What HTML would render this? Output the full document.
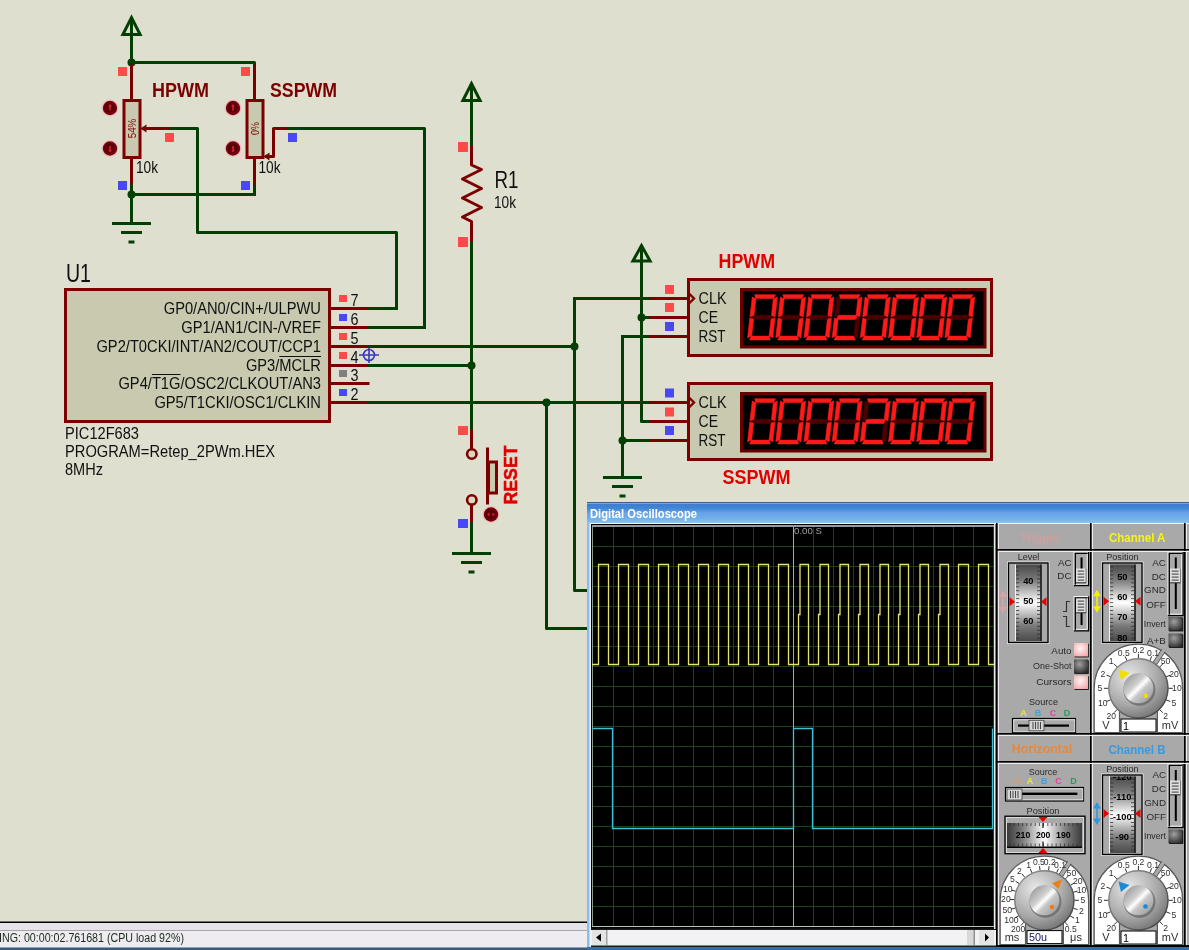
<!DOCTYPE html><html><head><meta charset="utf-8"><style>html,body{margin:0;padding:0;width:1189px;height:950px;overflow:hidden;background:#DFDFD0}</style></head><body>
<svg width="1189" height="950" viewBox="0 0 1189 950" style="position:absolute;left:0;top:0;will-change:transform" font-family="Liberation Sans, sans-serif">
<rect width="1189" height="950" fill="#DFDFD0"/>
<path d="M122.9,34.5 L131.5,17.6 L140.1,34.5 Z M131.5,18.6 V34.5" fill="none" stroke="#033F03" stroke-width="3" stroke-linejoin="miter"/>
<path d="M131.5,34 L131.5,62.5" fill="none" stroke="#033F03" stroke-width="3" stroke-linecap="square" stroke-linejoin="round"/>
<path d="M131.5,62.5 L254.5,62.5 L254.5,66" fill="none" stroke="#033F03" stroke-width="3" stroke-linecap="square" stroke-linejoin="round"/>
<circle cx="131.5" cy="62.5" r="4" fill="#033F03"/>
<path d="M131.5,66 L131.5,99" fill="none" stroke="#7D0000" stroke-width="3" stroke-linecap="square" stroke-linejoin="round"/>
<rect x="124.0" y="100.5" width="16" height="57" fill="#C9C9B0" stroke="#7D0000" stroke-width="3"/>
<path d="M131.5,158 L131.5,186" fill="none" stroke="#7D0000" stroke-width="3" stroke-linecap="square" stroke-linejoin="round"/>
<path d="M131.5,186 L131.5,194.5" fill="none" stroke="#033F03" stroke-width="3" stroke-linecap="square" stroke-linejoin="round"/>
<rect x="118.0" y="67" width="9" height="9" fill="#FF4A4A"/>
<rect x="118.0" y="181" width="9" height="9" fill="#4848F8"/>
<circle cx="110.0" cy="108" r="8.5" fill="#F4B4B4" opacity="0.7"/>
<circle cx="110.0" cy="108" r="7.2" fill="#780010"/>
<circle cx="109.5" cy="107.5" r="5.2" fill="#5A0008"/>
<path d="M108.0,106.5 L110.0,104 L112.0,106.5 Z M109.2,106 h1.6 v4.5 h-1.6 Z" fill="#D82030"/>
<circle cx="110.0" cy="148.5" r="8.5" fill="#F4B4B4" opacity="0.7"/>
<circle cx="110.0" cy="148.5" r="7.2" fill="#780010"/>
<circle cx="109.5" cy="148.0" r="5.2" fill="#5A0008"/>
<path d="M108.0,150.0 L110.0,152.5 L112.0,150.0 Z M109.2,150.5 h1.6 v-4.5 h-1.6 Z" fill="#D82030"/>
<path d="M254.5,66 L254.5,99" fill="none" stroke="#7D0000" stroke-width="3" stroke-linecap="square" stroke-linejoin="round"/>
<rect x="247.0" y="100.5" width="16" height="57" fill="#C9C9B0" stroke="#7D0000" stroke-width="3"/>
<path d="M254.5,158 L254.5,186" fill="none" stroke="#7D0000" stroke-width="3" stroke-linecap="square" stroke-linejoin="round"/>
<path d="M254.5,186 L254.5,194.5" fill="none" stroke="#033F03" stroke-width="3" stroke-linecap="square" stroke-linejoin="round"/>
<rect x="241.0" y="67" width="9" height="9" fill="#FF4A4A"/>
<rect x="241.0" y="181" width="9" height="9" fill="#4848F8"/>
<circle cx="233.0" cy="108" r="8.5" fill="#F4B4B4" opacity="0.7"/>
<circle cx="233.0" cy="108" r="7.2" fill="#780010"/>
<circle cx="232.5" cy="107.5" r="5.2" fill="#5A0008"/>
<path d="M231.0,106.5 L233.0,104 L235.0,106.5 Z M232.2,106 h1.6 v4.5 h-1.6 Z" fill="#D82030"/>
<circle cx="233.0" cy="148.5" r="8.5" fill="#F4B4B4" opacity="0.7"/>
<circle cx="233.0" cy="148.5" r="7.2" fill="#780010"/>
<circle cx="232.5" cy="148.0" r="5.2" fill="#5A0008"/>
<path d="M231.0,150.0 L233.0,152.5 L235.0,150.0 Z M232.2,150.5 h1.6 v-4.5 h-1.6 Z" fill="#D82030"/>
<circle cx="131.5" cy="194.5" r="4" fill="#033F03"/>
<path d="M131.5,194.5 L254.5,194.5" fill="none" stroke="#033F03" stroke-width="3" stroke-linecap="square" stroke-linejoin="round"/>
<path d="M131.5,194.5 L131.5,223" fill="none" stroke="#033F03" stroke-width="3" stroke-linecap="square" stroke-linejoin="round"/>
<path d="M112.0,223.5 H151.0 M121.0,232.5 H142.0 M128.5,242.0 H134.5" stroke="#033F03" stroke-width="3" fill="none"/>
<path d="M140.5,128.5 l6,-4 v8 z" fill="#7D0000"/>
<path d="M143.5,128.5 L171,128.5" fill="none" stroke="#7D0000" stroke-width="3" stroke-linecap="square" stroke-linejoin="round"/>
<path d="M171,128.5 L197.5,128.5 L197.5,232.5 L396.5,232.5 L396.5,308" fill="none" stroke="#033F03" stroke-width="3" stroke-linecap="square" stroke-linejoin="round"/>
<rect x="165" y="133" width="9" height="9" fill="#FF4A4A"/>
<path d="M263.5,156.5 l6,-4 v8 z" fill="#7D0000"/>
<path d="M266.5,156.5 L273.5,156.5 L273.5,128.5 L289,128.5" fill="none" stroke="#7D0000" stroke-width="3" stroke-linecap="square" stroke-linejoin="round"/>
<path d="M289,128.5 L424.5,128.5 L424.5,327" fill="none" stroke="#033F03" stroke-width="3" stroke-linecap="square" stroke-linejoin="round"/>
<rect x="288" y="133" width="9" height="9" fill="#4848F8"/>
<text x="0" y="0" font-size="10" fill="#7D0000" font-weight="normal" text-anchor="middle" textLength="19.5" lengthAdjust="spacingAndGlyphs" transform="translate(136,128.5) rotate(-90)">54%</text>
<text x="0" y="0" font-size="10" fill="#7D0000" font-weight="normal" text-anchor="middle" textLength="13" lengthAdjust="spacingAndGlyphs" transform="translate(259,128.5) rotate(-90)">0%</text>
<text x="152" y="97" font-size="20.5" fill="#7D0000" font-weight="bold" text-anchor="start" textLength="57" lengthAdjust="spacingAndGlyphs" >HPWM</text>
<text x="270" y="97" font-size="20.5" fill="#7D0000" font-weight="bold" text-anchor="start" textLength="67" lengthAdjust="spacingAndGlyphs" >SSPWM</text>
<text x="136" y="173" font-size="16" fill="#101010" font-weight="normal" text-anchor="start" textLength="22" lengthAdjust="spacingAndGlyphs" >10k</text>
<text x="258.5" y="173" font-size="16" fill="#101010" font-weight="normal" text-anchor="start" textLength="22" lengthAdjust="spacingAndGlyphs" >10k</text>
<rect x="65.5" y="289.5" width="264" height="132" fill="#C9C9B0" stroke="#7D0000" stroke-width="3"/>
<text x="66" y="282" font-size="26" fill="#101010" font-weight="normal" text-anchor="start" textLength="25" lengthAdjust="spacingAndGlyphs" >U1</text>
<path d="M331,308.5 L369.5,308.5" fill="none" stroke="#7D0000" stroke-width="3" stroke-linecap="square" stroke-linejoin="round"/>
<rect x="339" y="295.0" width="8" height="7" fill="#FF4A4A"/>
<text x="350.5" y="305.5" font-size="16" fill="#101010" font-weight="normal" text-anchor="start" textLength="8" lengthAdjust="spacingAndGlyphs" >7</text>
<text x="321" y="313.5" font-size="17" fill="#101010" font-weight="normal" text-anchor="end" textLength="157.3" lengthAdjust="spacingAndGlyphs" >GP0/AN0/CIN+/ULPWU</text>
<path d="M331,327.5 L369.5,327.5" fill="none" stroke="#7D0000" stroke-width="3" stroke-linecap="square" stroke-linejoin="round"/>
<rect x="339" y="314.0" width="8" height="7" fill="#4848F8"/>
<text x="350.5" y="324.5" font-size="16" fill="#101010" font-weight="normal" text-anchor="start" textLength="8" lengthAdjust="spacingAndGlyphs" >6</text>
<text x="321" y="332.5" font-size="17" fill="#101010" font-weight="normal" text-anchor="end" textLength="139.7" lengthAdjust="spacingAndGlyphs" >GP1/AN1/CIN-/VREF</text>
<path d="M331,346.5 L369.5,346.5" fill="none" stroke="#7D0000" stroke-width="3" stroke-linecap="square" stroke-linejoin="round"/>
<rect x="339" y="333.0" width="8" height="7" fill="#FF4A4A"/>
<text x="350.5" y="343.5" font-size="16" fill="#101010" font-weight="normal" text-anchor="start" textLength="8" lengthAdjust="spacingAndGlyphs" >5</text>
<text x="321" y="351.5" font-size="17" fill="#101010" font-weight="normal" text-anchor="end" textLength="224.6" lengthAdjust="spacingAndGlyphs" >GP2/T0CKI/INT/AN2/COUT/CCP1</text>
<path d="M331,365.5 L369.5,365.5" fill="none" stroke="#7D0000" stroke-width="3" stroke-linecap="square" stroke-linejoin="round"/>
<rect x="339" y="352.0" width="8" height="7" fill="#FF4A4A"/>
<text x="350.5" y="362.5" font-size="16" fill="#101010" font-weight="normal" text-anchor="start" textLength="8" lengthAdjust="spacingAndGlyphs" >4</text>
<text x="321" y="370.5" font-size="17" fill="#101010" font-weight="normal" text-anchor="end" textLength="75.1" lengthAdjust="spacingAndGlyphs" >GP3/MCLR</text>
<path d="M331,383.5 L368,383.5" fill="none" stroke="#7D0000" stroke-width="3" stroke-linecap="square" stroke-linejoin="round"/>
<rect x="339" y="370.0" width="8" height="7" fill="#808080"/>
<text x="350.5" y="380.5" font-size="16" fill="#101010" font-weight="normal" text-anchor="start" textLength="8" lengthAdjust="spacingAndGlyphs" >3</text>
<text x="321" y="388.5" font-size="17" fill="#101010" font-weight="normal" text-anchor="end" textLength="202.6" lengthAdjust="spacingAndGlyphs" >GP4/T1G/OSC2/CLKOUT/AN3</text>
<path d="M331,402.5 L369.5,402.5" fill="none" stroke="#7D0000" stroke-width="3" stroke-linecap="square" stroke-linejoin="round"/>
<rect x="339" y="389.0" width="8" height="7" fill="#4848F8"/>
<text x="350.5" y="399.5" font-size="16" fill="#101010" font-weight="normal" text-anchor="start" textLength="8" lengthAdjust="spacingAndGlyphs" >2</text>
<text x="321" y="407.5" font-size="17" fill="#101010" font-weight="normal" text-anchor="end" textLength="166.6" lengthAdjust="spacingAndGlyphs" >GP5/T1CKI/OSC1/CLKIN</text>
<path d="M279.3,356.5 H321" stroke="#101010" stroke-width="1"/>
<path d="M151.9,374.5 H180.5" stroke="#101010" stroke-width="1"/>
<text x="65" y="439" font-size="17" fill="#101010" font-weight="normal" text-anchor="start" textLength="74" lengthAdjust="spacingAndGlyphs" >PIC12F683</text>
<text x="65" y="457" font-size="17" fill="#101010" font-weight="normal" text-anchor="start" textLength="210" lengthAdjust="spacingAndGlyphs" >PROGRAM=Retep_2PWm.HEX</text>
<text x="65" y="475" font-size="17" fill="#101010" font-weight="normal" text-anchor="start" textLength="38" lengthAdjust="spacingAndGlyphs" >8MHz</text>
<g stroke="#3838C0" stroke-width="1.6" fill="none"><circle cx="369" cy="355" r="5.5"/><path d="M359,355 H379 M369,345 V363"/></g>
<path d="M369.5,308.5 L396.5,308.5" fill="none" stroke="#033F03" stroke-width="3" stroke-linecap="square" stroke-linejoin="round"/>
<path d="M369.5,327.5 L424.5,327.5" fill="none" stroke="#033F03" stroke-width="3" stroke-linecap="square" stroke-linejoin="round"/>
<path d="M369.5,346.5 L574.5,346.5" fill="none" stroke="#033F03" stroke-width="3" stroke-linecap="square" stroke-linejoin="round"/>
<path d="M369.5,365.5 L471.5,365.5" fill="none" stroke="#033F03" stroke-width="3" stroke-linecap="square" stroke-linejoin="round"/>
<path d="M369.5,402.5 L651,402.5" fill="none" stroke="#033F03" stroke-width="3" stroke-linecap="square" stroke-linejoin="round"/>
<circle cx="471.5" cy="365.5" r="4" fill="#033F03"/>
<circle cx="574.5" cy="346.5" r="4" fill="#033F03"/>
<circle cx="546.5" cy="402.5" r="4" fill="#033F03"/>
<path d="M462.9,100.5 L471.5,83.6 L480.1,100.5 Z M471.5,84.6 V100.5" fill="none" stroke="#033F03" stroke-width="3" stroke-linejoin="miter"/>
<path d="M471.5,100 L471.5,147" fill="none" stroke="#033F03" stroke-width="3" stroke-linecap="square" stroke-linejoin="round"/>
<path d="M471.5,147 L471.5,165 L481.5,169.5 L462.5,179 L481.5,188.5 L462.5,198 L481.5,207.5 L462.5,217 L471.5,221.5 L471.5,243" fill="none" stroke="#7D0000" stroke-width="3" stroke-linecap="square" stroke-linejoin="round"/>
<rect x="458" y="142" width="10" height="10" fill="#FF4A4A"/>
<rect x="458" y="237" width="10" height="10" fill="#FF4A4A"/>
<path d="M471.5,243 L471.5,431" fill="none" stroke="#033F03" stroke-width="3" stroke-linecap="square" stroke-linejoin="round"/>
<text x="494.5" y="187.5" font-size="23.5" fill="#101010" font-weight="normal" text-anchor="start" textLength="24" lengthAdjust="spacingAndGlyphs" >R1</text>
<text x="494" y="207.5" font-size="16" fill="#101010" font-weight="normal" text-anchor="start" textLength="22" lengthAdjust="spacingAndGlyphs" >10k</text>
<rect x="458" y="426" width="10" height="9" fill="#FF4A4A"/>
<path d="M471.5,431 L471.5,449" fill="none" stroke="#7D0000" stroke-width="3" stroke-linecap="square" stroke-linejoin="round"/>
<circle cx="471.8" cy="454" r="4.7" fill="#D8D8C0" stroke="#7D0000" stroke-width="2.6"/>
<circle cx="471.8" cy="500" r="4.7" fill="#D8D8C0" stroke="#7D0000" stroke-width="2.6"/>
<path d="M471.5,505 L471.5,523.5" fill="none" stroke="#7D0000" stroke-width="3" stroke-linecap="square" stroke-linejoin="round"/>
<path d="M471.5,523.5 L471.5,553" fill="none" stroke="#033F03" stroke-width="3" stroke-linecap="square" stroke-linejoin="round"/>
<rect x="458" y="519" width="10" height="9" fill="#4848F8"/>
<path d="M452.0,553.5 H491.0 M461.0,562.5 H482.0 M468.5,572.0 H474.5" stroke="#033F03" stroke-width="3" fill="none"/>
<path d="M487.5,449 L487.5,503" fill="none" stroke="#7D0000" stroke-width="3" stroke-linecap="square" stroke-linejoin="round"/>
<rect x="488.5" y="462" width="8" height="31" fill="#C9C9B0" stroke="#7D0000" stroke-width="3"/>
<circle cx="491" cy="514.5" r="8.5" fill="#F4B4B4" opacity="0.7"/>
<circle cx="491" cy="514.5" r="7.2" fill="#780010"/>
<circle cx="490.5" cy="514.0" r="5.2" fill="#5A0008"/>
<path d="M487,514.5 L489.5,512.5 V516.5 Z M495,514.5 L492.5,512.5 V516.5 Z" fill="#D82030"/>
<text x="0" y="0" font-size="18.5" fill="#E00000" font-weight="bold" text-anchor="start" textLength="59" lengthAdjust="spacingAndGlyphs" stroke="#E00000" stroke-width="0.5" transform="translate(517,504.5) rotate(-90)">RESET</text>
<path d="M632.9,261 L641.5,245.6 L650.1,261 Z M641.5,246.6 V261" fill="none" stroke="#033F03" stroke-width="3" stroke-linejoin="miter"/>
<path d="M641.5,261 L641.5,421.5 L688,421.5" fill="none" stroke="#033F03" stroke-width="3" stroke-linecap="square" stroke-linejoin="round"/>
<circle cx="641.5" cy="317.5" r="4" fill="#033F03"/>
<path d="M641.5,317.5 L651,317.5" fill="none" stroke="#033F03" stroke-width="3" stroke-linecap="square" stroke-linejoin="round"/>
<path d="M574.5,298.5 L651,298.5" fill="none" stroke="#033F03" stroke-width="3" stroke-linecap="square" stroke-linejoin="round"/>
<path d="M574.5,298.5 L574.5,590.5 L588,590.5" fill="none" stroke="#033F03" stroke-width="3" stroke-linecap="square" stroke-linejoin="round"/>
<path d="M546.5,402.5 L546.5,628.5 L588,628.5" fill="none" stroke="#033F03" stroke-width="3" stroke-linecap="square" stroke-linejoin="round"/>
<path d="M622.5,336.5 L651,336.5" fill="none" stroke="#033F03" stroke-width="3" stroke-linecap="square" stroke-linejoin="round"/>
<path d="M622.5,336.5 L622.5,477" fill="none" stroke="#033F03" stroke-width="3" stroke-linecap="square" stroke-linejoin="round"/>
<circle cx="622.5" cy="440.5" r="4" fill="#033F03"/>
<path d="M622.5,440.5 L651,440.5" fill="none" stroke="#033F03" stroke-width="3" stroke-linecap="square" stroke-linejoin="round"/>
<path d="M603.0,477.5 H642.0 M612.0,486.5 H633.0 M619.5,496.0 H625.5" stroke="#033F03" stroke-width="3" fill="none"/>
<rect x="688.5" y="279.5" width="303" height="76" fill="#C9C9B0" stroke="#7D0000" stroke-width="3"/>
<rect x="741.5" y="289.5" width="243.5" height="57.5" fill="#000" stroke="#680000" stroke-width="3"/>
<path d="M651,298.5 L687,298.5" fill="none" stroke="#7D0000" stroke-width="3" stroke-linecap="square" stroke-linejoin="round"/>
<text x="698.5" y="303.5" font-size="17" fill="#101010" font-weight="normal" text-anchor="start" textLength="28" lengthAdjust="spacingAndGlyphs" >CLK</text>
<path d="M651,317.5 L687,317.5" fill="none" stroke="#7D0000" stroke-width="3" stroke-linecap="square" stroke-linejoin="round"/>
<text x="698.5" y="322.5" font-size="17" fill="#101010" font-weight="normal" text-anchor="start" textLength="19.5" lengthAdjust="spacingAndGlyphs" >CE</text>
<path d="M651,336.5 L687,336.5" fill="none" stroke="#7D0000" stroke-width="3" stroke-linecap="square" stroke-linejoin="round"/>
<text x="698.5" y="341.5" font-size="17" fill="#101010" font-weight="normal" text-anchor="start" textLength="27" lengthAdjust="spacingAndGlyphs" >RST</text>
<path d="M688,292.5 l6,6 l-6,6" fill="none" stroke="#7D0000" stroke-width="2.4"/>
<rect x="688.5" y="383.5" width="303" height="76" fill="#C9C9B0" stroke="#7D0000" stroke-width="3"/>
<rect x="741.5" y="393.5" width="243.5" height="57.5" fill="#000" stroke="#680000" stroke-width="3"/>
<path d="M651,402.5 L687,402.5" fill="none" stroke="#7D0000" stroke-width="3" stroke-linecap="square" stroke-linejoin="round"/>
<text x="698.5" y="407.5" font-size="17" fill="#101010" font-weight="normal" text-anchor="start" textLength="28" lengthAdjust="spacingAndGlyphs" >CLK</text>
<path d="M651,421.5 L687,421.5" fill="none" stroke="#7D0000" stroke-width="3" stroke-linecap="square" stroke-linejoin="round"/>
<text x="698.5" y="426.5" font-size="17" fill="#101010" font-weight="normal" text-anchor="start" textLength="19.5" lengthAdjust="spacingAndGlyphs" >CE</text>
<path d="M651,440.5 L687,440.5" fill="none" stroke="#7D0000" stroke-width="3" stroke-linecap="square" stroke-linejoin="round"/>
<text x="698.5" y="445.5" font-size="17" fill="#101010" font-weight="normal" text-anchor="start" textLength="27" lengthAdjust="spacingAndGlyphs" >RST</text>
<path d="M688,396.5 l6,6 l-6,6" fill="none" stroke="#7D0000" stroke-width="2.4"/>
<rect x="665" y="285" width="9" height="9" fill="#FF4A4A"/>
<rect x="665" y="303" width="9" height="9" fill="#FF4A4A"/>
<rect x="665" y="322" width="9" height="9" fill="#4848F8"/>
<rect x="665" y="388.5" width="9" height="9" fill="#4848F8"/>
<rect x="665" y="407.5" width="9" height="9" fill="#FF4A4A"/>
<rect x="665" y="426" width="9" height="9" fill="#4848F8"/>
<text x="718.5" y="268" font-size="20.5" fill="#E00000" font-weight="bold" text-anchor="start" textLength="56.5" lengthAdjust="spacingAndGlyphs" >HPWM</text>
<text x="722.5" y="483.5" font-size="20.5" fill="#E00000" font-weight="bold" text-anchor="start" textLength="68" lengthAdjust="spacingAndGlyphs" >SSPWM</text>
<polygon points="754.70,294.70 775.50,294.70 773.65,298.60 755.65,298.60" fill="#FF1A1A" stroke="#FF1A1A" stroke-width="0.6" stroke-linejoin="round"/>
<polygon points="751.35,336.10 769.35,336.10 770.30,340.00 749.50,340.00" fill="#FF1A1A" stroke="#FF1A1A" stroke-width="0.6" stroke-linejoin="round"/>
<polygon points="752.25,296.90 755.91,299.00 753.98,315.75 749.97,316.75" fill="#FF1A1A" stroke="#FF1A1A" stroke-width="0.6" stroke-linejoin="round"/>
<polygon points="749.83,317.95 753.62,318.95 751.69,335.70 747.55,337.80" fill="#FF1A1A" stroke="#FF1A1A" stroke-width="0.6" stroke-linejoin="round"/>
<polygon points="777.45,296.90 775.17,316.75 771.38,315.75 773.31,299.00" fill="#FF1A1A" stroke="#FF1A1A" stroke-width="0.6" stroke-linejoin="round"/>
<polygon points="775.03,317.95 772.75,337.80 769.09,335.70 771.02,318.95" fill="#FF1A1A" stroke="#FF1A1A" stroke-width="0.6" stroke-linejoin="round"/>
<polygon points="752.40,317.35 754.54,315.25 770.94,315.25 772.60,317.35 770.46,319.45 754.06,319.45" fill="#4C0000" stroke="#4C0000" stroke-width="0.6" stroke-linejoin="round"/>
<polygon points="782.90,294.70 803.70,294.70 801.85,298.60 783.85,298.60" fill="#FF1A1A" stroke="#FF1A1A" stroke-width="0.6" stroke-linejoin="round"/>
<polygon points="779.55,336.10 797.55,336.10 798.50,340.00 777.70,340.00" fill="#FF1A1A" stroke="#FF1A1A" stroke-width="0.6" stroke-linejoin="round"/>
<polygon points="780.45,296.90 784.11,299.00 782.18,315.75 778.17,316.75" fill="#FF1A1A" stroke="#FF1A1A" stroke-width="0.6" stroke-linejoin="round"/>
<polygon points="778.03,317.95 781.82,318.95 779.89,335.70 775.75,337.80" fill="#FF1A1A" stroke="#FF1A1A" stroke-width="0.6" stroke-linejoin="round"/>
<polygon points="805.65,296.90 803.37,316.75 799.58,315.75 801.51,299.00" fill="#FF1A1A" stroke="#FF1A1A" stroke-width="0.6" stroke-linejoin="round"/>
<polygon points="803.23,317.95 800.95,337.80 797.29,335.70 799.22,318.95" fill="#FF1A1A" stroke="#FF1A1A" stroke-width="0.6" stroke-linejoin="round"/>
<polygon points="780.60,317.35 782.74,315.25 799.14,315.25 800.80,317.35 798.66,319.45 782.26,319.45" fill="#4C0000" stroke="#4C0000" stroke-width="0.6" stroke-linejoin="round"/>
<polygon points="811.10,294.70 831.90,294.70 830.05,298.60 812.05,298.60" fill="#FF1A1A" stroke="#FF1A1A" stroke-width="0.6" stroke-linejoin="round"/>
<polygon points="807.75,336.10 825.75,336.10 826.70,340.00 805.90,340.00" fill="#FF1A1A" stroke="#FF1A1A" stroke-width="0.6" stroke-linejoin="round"/>
<polygon points="808.65,296.90 812.31,299.00 810.38,315.75 806.37,316.75" fill="#FF1A1A" stroke="#FF1A1A" stroke-width="0.6" stroke-linejoin="round"/>
<polygon points="806.23,317.95 810.02,318.95 808.09,335.70 803.95,337.80" fill="#FF1A1A" stroke="#FF1A1A" stroke-width="0.6" stroke-linejoin="round"/>
<polygon points="833.85,296.90 831.57,316.75 827.78,315.75 829.71,299.00" fill="#FF1A1A" stroke="#FF1A1A" stroke-width="0.6" stroke-linejoin="round"/>
<polygon points="831.43,317.95 829.15,337.80 825.49,335.70 827.42,318.95" fill="#FF1A1A" stroke="#FF1A1A" stroke-width="0.6" stroke-linejoin="round"/>
<polygon points="808.80,317.35 810.94,315.25 827.34,315.25 829.00,317.35 826.86,319.45 810.46,319.45" fill="#4C0000" stroke="#4C0000" stroke-width="0.6" stroke-linejoin="round"/>
<polygon points="839.30,294.70 860.10,294.70 858.25,298.60 840.25,298.60" fill="#FF1A1A" stroke="#FF1A1A" stroke-width="0.6" stroke-linejoin="round"/>
<polygon points="835.95,336.10 853.95,336.10 854.90,340.00 834.10,340.00" fill="#FF1A1A" stroke="#FF1A1A" stroke-width="0.6" stroke-linejoin="round"/>
<polygon points="836.85,296.90 840.51,299.00 838.58,315.75 834.57,316.75" fill="#4C0000" stroke="#4C0000" stroke-width="0.6" stroke-linejoin="round"/>
<polygon points="834.43,317.95 838.22,318.95 836.29,335.70 832.15,337.80" fill="#FF1A1A" stroke="#FF1A1A" stroke-width="0.6" stroke-linejoin="round"/>
<polygon points="862.05,296.90 859.77,316.75 855.98,315.75 857.91,299.00" fill="#FF1A1A" stroke="#FF1A1A" stroke-width="0.6" stroke-linejoin="round"/>
<polygon points="859.63,317.95 857.35,337.80 853.69,335.70 855.62,318.95" fill="#4C0000" stroke="#4C0000" stroke-width="0.6" stroke-linejoin="round"/>
<polygon points="837.00,317.35 839.14,315.25 855.54,315.25 857.20,317.35 855.06,319.45 838.66,319.45" fill="#FF1A1A" stroke="#FF1A1A" stroke-width="0.6" stroke-linejoin="round"/>
<polygon points="867.50,294.70 888.30,294.70 886.45,298.60 868.45,298.60" fill="#FF1A1A" stroke="#FF1A1A" stroke-width="0.6" stroke-linejoin="round"/>
<polygon points="864.15,336.10 882.15,336.10 883.10,340.00 862.30,340.00" fill="#FF1A1A" stroke="#FF1A1A" stroke-width="0.6" stroke-linejoin="round"/>
<polygon points="865.05,296.90 868.71,299.00 866.78,315.75 862.77,316.75" fill="#FF1A1A" stroke="#FF1A1A" stroke-width="0.6" stroke-linejoin="round"/>
<polygon points="862.63,317.95 866.42,318.95 864.49,335.70 860.35,337.80" fill="#FF1A1A" stroke="#FF1A1A" stroke-width="0.6" stroke-linejoin="round"/>
<polygon points="890.25,296.90 887.97,316.75 884.18,315.75 886.11,299.00" fill="#FF1A1A" stroke="#FF1A1A" stroke-width="0.6" stroke-linejoin="round"/>
<polygon points="887.83,317.95 885.55,337.80 881.89,335.70 883.82,318.95" fill="#FF1A1A" stroke="#FF1A1A" stroke-width="0.6" stroke-linejoin="round"/>
<polygon points="865.20,317.35 867.34,315.25 883.74,315.25 885.40,317.35 883.26,319.45 866.86,319.45" fill="#4C0000" stroke="#4C0000" stroke-width="0.6" stroke-linejoin="round"/>
<polygon points="895.70,294.70 916.50,294.70 914.65,298.60 896.65,298.60" fill="#FF1A1A" stroke="#FF1A1A" stroke-width="0.6" stroke-linejoin="round"/>
<polygon points="892.35,336.10 910.35,336.10 911.30,340.00 890.50,340.00" fill="#FF1A1A" stroke="#FF1A1A" stroke-width="0.6" stroke-linejoin="round"/>
<polygon points="893.25,296.90 896.91,299.00 894.98,315.75 890.97,316.75" fill="#FF1A1A" stroke="#FF1A1A" stroke-width="0.6" stroke-linejoin="round"/>
<polygon points="890.83,317.95 894.62,318.95 892.69,335.70 888.55,337.80" fill="#FF1A1A" stroke="#FF1A1A" stroke-width="0.6" stroke-linejoin="round"/>
<polygon points="918.45,296.90 916.17,316.75 912.38,315.75 914.31,299.00" fill="#FF1A1A" stroke="#FF1A1A" stroke-width="0.6" stroke-linejoin="round"/>
<polygon points="916.03,317.95 913.75,337.80 910.09,335.70 912.02,318.95" fill="#FF1A1A" stroke="#FF1A1A" stroke-width="0.6" stroke-linejoin="round"/>
<polygon points="893.40,317.35 895.54,315.25 911.94,315.25 913.60,317.35 911.46,319.45 895.06,319.45" fill="#4C0000" stroke="#4C0000" stroke-width="0.6" stroke-linejoin="round"/>
<polygon points="923.90,294.70 944.70,294.70 942.85,298.60 924.85,298.60" fill="#FF1A1A" stroke="#FF1A1A" stroke-width="0.6" stroke-linejoin="round"/>
<polygon points="920.55,336.10 938.55,336.10 939.50,340.00 918.70,340.00" fill="#FF1A1A" stroke="#FF1A1A" stroke-width="0.6" stroke-linejoin="round"/>
<polygon points="921.45,296.90 925.11,299.00 923.18,315.75 919.17,316.75" fill="#FF1A1A" stroke="#FF1A1A" stroke-width="0.6" stroke-linejoin="round"/>
<polygon points="919.03,317.95 922.82,318.95 920.89,335.70 916.75,337.80" fill="#FF1A1A" stroke="#FF1A1A" stroke-width="0.6" stroke-linejoin="round"/>
<polygon points="946.65,296.90 944.37,316.75 940.58,315.75 942.51,299.00" fill="#FF1A1A" stroke="#FF1A1A" stroke-width="0.6" stroke-linejoin="round"/>
<polygon points="944.23,317.95 941.95,337.80 938.29,335.70 940.22,318.95" fill="#FF1A1A" stroke="#FF1A1A" stroke-width="0.6" stroke-linejoin="round"/>
<polygon points="921.60,317.35 923.74,315.25 940.14,315.25 941.80,317.35 939.66,319.45 923.26,319.45" fill="#4C0000" stroke="#4C0000" stroke-width="0.6" stroke-linejoin="round"/>
<polygon points="952.10,294.70 972.90,294.70 971.05,298.60 953.05,298.60" fill="#FF1A1A" stroke="#FF1A1A" stroke-width="0.6" stroke-linejoin="round"/>
<polygon points="948.75,336.10 966.75,336.10 967.70,340.00 946.90,340.00" fill="#FF1A1A" stroke="#FF1A1A" stroke-width="0.6" stroke-linejoin="round"/>
<polygon points="949.65,296.90 953.31,299.00 951.38,315.75 947.37,316.75" fill="#FF1A1A" stroke="#FF1A1A" stroke-width="0.6" stroke-linejoin="round"/>
<polygon points="947.23,317.95 951.02,318.95 949.09,335.70 944.95,337.80" fill="#FF1A1A" stroke="#FF1A1A" stroke-width="0.6" stroke-linejoin="round"/>
<polygon points="974.85,296.90 972.57,316.75 968.78,315.75 970.71,299.00" fill="#FF1A1A" stroke="#FF1A1A" stroke-width="0.6" stroke-linejoin="round"/>
<polygon points="972.43,317.95 970.15,337.80 966.49,335.70 968.42,318.95" fill="#FF1A1A" stroke="#FF1A1A" stroke-width="0.6" stroke-linejoin="round"/>
<polygon points="949.80,317.35 951.94,315.25 968.34,315.25 970.00,317.35 967.86,319.45 951.46,319.45" fill="#4C0000" stroke="#4C0000" stroke-width="0.6" stroke-linejoin="round"/>
<polygon points="754.70,398.70 775.50,398.70 773.65,402.60 755.65,402.60" fill="#FF1A1A" stroke="#FF1A1A" stroke-width="0.6" stroke-linejoin="round"/>
<polygon points="751.35,440.10 769.35,440.10 770.30,444.00 749.50,444.00" fill="#FF1A1A" stroke="#FF1A1A" stroke-width="0.6" stroke-linejoin="round"/>
<polygon points="752.25,400.90 755.91,403.00 753.98,419.75 749.97,420.75" fill="#FF1A1A" stroke="#FF1A1A" stroke-width="0.6" stroke-linejoin="round"/>
<polygon points="749.83,421.95 753.62,422.95 751.69,439.70 747.55,441.80" fill="#FF1A1A" stroke="#FF1A1A" stroke-width="0.6" stroke-linejoin="round"/>
<polygon points="777.45,400.90 775.17,420.75 771.38,419.75 773.31,403.00" fill="#FF1A1A" stroke="#FF1A1A" stroke-width="0.6" stroke-linejoin="round"/>
<polygon points="775.03,421.95 772.75,441.80 769.09,439.70 771.02,422.95" fill="#FF1A1A" stroke="#FF1A1A" stroke-width="0.6" stroke-linejoin="round"/>
<polygon points="752.40,421.35 754.54,419.25 770.94,419.25 772.60,421.35 770.46,423.45 754.06,423.45" fill="#4C0000" stroke="#4C0000" stroke-width="0.6" stroke-linejoin="round"/>
<polygon points="782.90,398.70 803.70,398.70 801.85,402.60 783.85,402.60" fill="#FF1A1A" stroke="#FF1A1A" stroke-width="0.6" stroke-linejoin="round"/>
<polygon points="779.55,440.10 797.55,440.10 798.50,444.00 777.70,444.00" fill="#FF1A1A" stroke="#FF1A1A" stroke-width="0.6" stroke-linejoin="round"/>
<polygon points="780.45,400.90 784.11,403.00 782.18,419.75 778.17,420.75" fill="#FF1A1A" stroke="#FF1A1A" stroke-width="0.6" stroke-linejoin="round"/>
<polygon points="778.03,421.95 781.82,422.95 779.89,439.70 775.75,441.80" fill="#FF1A1A" stroke="#FF1A1A" stroke-width="0.6" stroke-linejoin="round"/>
<polygon points="805.65,400.90 803.37,420.75 799.58,419.75 801.51,403.00" fill="#FF1A1A" stroke="#FF1A1A" stroke-width="0.6" stroke-linejoin="round"/>
<polygon points="803.23,421.95 800.95,441.80 797.29,439.70 799.22,422.95" fill="#FF1A1A" stroke="#FF1A1A" stroke-width="0.6" stroke-linejoin="round"/>
<polygon points="780.60,421.35 782.74,419.25 799.14,419.25 800.80,421.35 798.66,423.45 782.26,423.45" fill="#4C0000" stroke="#4C0000" stroke-width="0.6" stroke-linejoin="round"/>
<polygon points="811.10,398.70 831.90,398.70 830.05,402.60 812.05,402.60" fill="#FF1A1A" stroke="#FF1A1A" stroke-width="0.6" stroke-linejoin="round"/>
<polygon points="807.75,440.10 825.75,440.10 826.70,444.00 805.90,444.00" fill="#FF1A1A" stroke="#FF1A1A" stroke-width="0.6" stroke-linejoin="round"/>
<polygon points="808.65,400.90 812.31,403.00 810.38,419.75 806.37,420.75" fill="#FF1A1A" stroke="#FF1A1A" stroke-width="0.6" stroke-linejoin="round"/>
<polygon points="806.23,421.95 810.02,422.95 808.09,439.70 803.95,441.80" fill="#FF1A1A" stroke="#FF1A1A" stroke-width="0.6" stroke-linejoin="round"/>
<polygon points="833.85,400.90 831.57,420.75 827.78,419.75 829.71,403.00" fill="#FF1A1A" stroke="#FF1A1A" stroke-width="0.6" stroke-linejoin="round"/>
<polygon points="831.43,421.95 829.15,441.80 825.49,439.70 827.42,422.95" fill="#FF1A1A" stroke="#FF1A1A" stroke-width="0.6" stroke-linejoin="round"/>
<polygon points="808.80,421.35 810.94,419.25 827.34,419.25 829.00,421.35 826.86,423.45 810.46,423.45" fill="#4C0000" stroke="#4C0000" stroke-width="0.6" stroke-linejoin="round"/>
<polygon points="839.30,398.70 860.10,398.70 858.25,402.60 840.25,402.60" fill="#FF1A1A" stroke="#FF1A1A" stroke-width="0.6" stroke-linejoin="round"/>
<polygon points="835.95,440.10 853.95,440.10 854.90,444.00 834.10,444.00" fill="#FF1A1A" stroke="#FF1A1A" stroke-width="0.6" stroke-linejoin="round"/>
<polygon points="836.85,400.90 840.51,403.00 838.58,419.75 834.57,420.75" fill="#FF1A1A" stroke="#FF1A1A" stroke-width="0.6" stroke-linejoin="round"/>
<polygon points="834.43,421.95 838.22,422.95 836.29,439.70 832.15,441.80" fill="#FF1A1A" stroke="#FF1A1A" stroke-width="0.6" stroke-linejoin="round"/>
<polygon points="862.05,400.90 859.77,420.75 855.98,419.75 857.91,403.00" fill="#FF1A1A" stroke="#FF1A1A" stroke-width="0.6" stroke-linejoin="round"/>
<polygon points="859.63,421.95 857.35,441.80 853.69,439.70 855.62,422.95" fill="#FF1A1A" stroke="#FF1A1A" stroke-width="0.6" stroke-linejoin="round"/>
<polygon points="837.00,421.35 839.14,419.25 855.54,419.25 857.20,421.35 855.06,423.45 838.66,423.45" fill="#4C0000" stroke="#4C0000" stroke-width="0.6" stroke-linejoin="round"/>
<polygon points="867.50,398.70 888.30,398.70 886.45,402.60 868.45,402.60" fill="#FF1A1A" stroke="#FF1A1A" stroke-width="0.6" stroke-linejoin="round"/>
<polygon points="864.15,440.10 882.15,440.10 883.10,444.00 862.30,444.00" fill="#FF1A1A" stroke="#FF1A1A" stroke-width="0.6" stroke-linejoin="round"/>
<polygon points="865.05,400.90 868.71,403.00 866.78,419.75 862.77,420.75" fill="#4C0000" stroke="#4C0000" stroke-width="0.6" stroke-linejoin="round"/>
<polygon points="862.63,421.95 866.42,422.95 864.49,439.70 860.35,441.80" fill="#FF1A1A" stroke="#FF1A1A" stroke-width="0.6" stroke-linejoin="round"/>
<polygon points="890.25,400.90 887.97,420.75 884.18,419.75 886.11,403.00" fill="#FF1A1A" stroke="#FF1A1A" stroke-width="0.6" stroke-linejoin="round"/>
<polygon points="887.83,421.95 885.55,441.80 881.89,439.70 883.82,422.95" fill="#4C0000" stroke="#4C0000" stroke-width="0.6" stroke-linejoin="round"/>
<polygon points="865.20,421.35 867.34,419.25 883.74,419.25 885.40,421.35 883.26,423.45 866.86,423.45" fill="#FF1A1A" stroke="#FF1A1A" stroke-width="0.6" stroke-linejoin="round"/>
<polygon points="895.70,398.70 916.50,398.70 914.65,402.60 896.65,402.60" fill="#FF1A1A" stroke="#FF1A1A" stroke-width="0.6" stroke-linejoin="round"/>
<polygon points="892.35,440.10 910.35,440.10 911.30,444.00 890.50,444.00" fill="#FF1A1A" stroke="#FF1A1A" stroke-width="0.6" stroke-linejoin="round"/>
<polygon points="893.25,400.90 896.91,403.00 894.98,419.75 890.97,420.75" fill="#FF1A1A" stroke="#FF1A1A" stroke-width="0.6" stroke-linejoin="round"/>
<polygon points="890.83,421.95 894.62,422.95 892.69,439.70 888.55,441.80" fill="#FF1A1A" stroke="#FF1A1A" stroke-width="0.6" stroke-linejoin="round"/>
<polygon points="918.45,400.90 916.17,420.75 912.38,419.75 914.31,403.00" fill="#FF1A1A" stroke="#FF1A1A" stroke-width="0.6" stroke-linejoin="round"/>
<polygon points="916.03,421.95 913.75,441.80 910.09,439.70 912.02,422.95" fill="#FF1A1A" stroke="#FF1A1A" stroke-width="0.6" stroke-linejoin="round"/>
<polygon points="893.40,421.35 895.54,419.25 911.94,419.25 913.60,421.35 911.46,423.45 895.06,423.45" fill="#4C0000" stroke="#4C0000" stroke-width="0.6" stroke-linejoin="round"/>
<polygon points="923.90,398.70 944.70,398.70 942.85,402.60 924.85,402.60" fill="#FF1A1A" stroke="#FF1A1A" stroke-width="0.6" stroke-linejoin="round"/>
<polygon points="920.55,440.10 938.55,440.10 939.50,444.00 918.70,444.00" fill="#FF1A1A" stroke="#FF1A1A" stroke-width="0.6" stroke-linejoin="round"/>
<polygon points="921.45,400.90 925.11,403.00 923.18,419.75 919.17,420.75" fill="#FF1A1A" stroke="#FF1A1A" stroke-width="0.6" stroke-linejoin="round"/>
<polygon points="919.03,421.95 922.82,422.95 920.89,439.70 916.75,441.80" fill="#FF1A1A" stroke="#FF1A1A" stroke-width="0.6" stroke-linejoin="round"/>
<polygon points="946.65,400.90 944.37,420.75 940.58,419.75 942.51,403.00" fill="#FF1A1A" stroke="#FF1A1A" stroke-width="0.6" stroke-linejoin="round"/>
<polygon points="944.23,421.95 941.95,441.80 938.29,439.70 940.22,422.95" fill="#FF1A1A" stroke="#FF1A1A" stroke-width="0.6" stroke-linejoin="round"/>
<polygon points="921.60,421.35 923.74,419.25 940.14,419.25 941.80,421.35 939.66,423.45 923.26,423.45" fill="#4C0000" stroke="#4C0000" stroke-width="0.6" stroke-linejoin="round"/>
<polygon points="952.10,398.70 972.90,398.70 971.05,402.60 953.05,402.60" fill="#FF1A1A" stroke="#FF1A1A" stroke-width="0.6" stroke-linejoin="round"/>
<polygon points="948.75,440.10 966.75,440.10 967.70,444.00 946.90,444.00" fill="#FF1A1A" stroke="#FF1A1A" stroke-width="0.6" stroke-linejoin="round"/>
<polygon points="949.65,400.90 953.31,403.00 951.38,419.75 947.37,420.75" fill="#FF1A1A" stroke="#FF1A1A" stroke-width="0.6" stroke-linejoin="round"/>
<polygon points="947.23,421.95 951.02,422.95 949.09,439.70 944.95,441.80" fill="#FF1A1A" stroke="#FF1A1A" stroke-width="0.6" stroke-linejoin="round"/>
<polygon points="974.85,400.90 972.57,420.75 968.78,419.75 970.71,403.00" fill="#FF1A1A" stroke="#FF1A1A" stroke-width="0.6" stroke-linejoin="round"/>
<polygon points="972.43,421.95 970.15,441.80 966.49,439.70 968.42,422.95" fill="#FF1A1A" stroke="#FF1A1A" stroke-width="0.6" stroke-linejoin="round"/>
<polygon points="949.80,421.35 951.94,419.25 968.34,419.25 970.00,421.35 967.86,423.45 951.46,423.45" fill="#4C0000" stroke="#4C0000" stroke-width="0.6" stroke-linejoin="round"/>
<defs><linearGradient id="tb" x1="0" y1="0" x2="0" y2="1"><stop offset="0" stop-color="#3B78D2"/><stop offset="0.3" stop-color="#4286D4"/><stop offset="0.5" stop-color="#66A0E8"/><stop offset="0.8" stop-color="#70B2E8"/><stop offset="1" stop-color="#8CC4F0"/></linearGradient><linearGradient id="vs" x1="0" y1="0" x2="0" y2="1"><stop offset="0" stop-color="#4A4A4A"/><stop offset="0.2" stop-color="#7A7A7A"/><stop offset="0.5" stop-color="#FFFFFF"/><stop offset="0.8" stop-color="#7A7A7A"/><stop offset="1" stop-color="#4A4A4A"/></linearGradient><linearGradient id="hs" x1="0" y1="0" x2="1" y2="0"><stop offset="0" stop-color="#3A3A3A"/><stop offset="0.2" stop-color="#7A7A7A"/><stop offset="0.5" stop-color="#FFFFFF"/><stop offset="0.8" stop-color="#7A7A7A"/><stop offset="1" stop-color="#3A3A3A"/></linearGradient><radialGradient id="pinkb" cx="0.45" cy="0.4" r="0.7"><stop offset="0" stop-color="#FFF4F4"/><stop offset="1" stop-color="#F0A8A8"/></radialGradient><radialGradient id="darkb" cx="0.4" cy="0.35" r="0.75"><stop offset="0" stop-color="#A0A0A0"/><stop offset="1" stop-color="#2A2A2A"/></radialGradient><radialGradient id="knob" cx="0.35" cy="0.3" r="0.8"><stop offset="0" stop-color="#E8E8E8"/><stop offset="0.6" stop-color="#A8A8A8"/><stop offset="1" stop-color="#6A6A6A"/></radialGradient><linearGradient id="cap" x1="0" y1="0" x2="1" y2="1"><stop offset="0" stop-color="#8A8A8A"/><stop offset="0.4" stop-color="#D0D0D0"/><stop offset="0.5" stop-color="#FFFFFF"/><stop offset="0.6" stop-color="#C8C8C8"/><stop offset="1" stop-color="#909090"/></linearGradient><linearGradient id="rim" x1="0" y1="0" x2="1" y2="1"><stop offset="0" stop-color="#9A9A9A"/><stop offset="1" stop-color="#3A3A3A"/></linearGradient></defs>
<rect x="0" y="922" width="588" height="28" fill="#EEECF0"/>
<rect x="0" y="921.5" width="588" height="1.5" fill="#000"/>
<rect x="0" y="923" width="588" height="7" fill="#E6E2EA"/>
<rect x="0" y="930" width="588" height="1" fill="#A8A4A8"/>
<rect x="0" y="947.5" width="588" height="2.5" fill="#3A5878"/>
<text x="-1" y="942" font-size="12" fill="#1A2A1A" font-weight="normal" text-anchor="start" textLength="185" lengthAdjust="spacingAndGlyphs" >ING: 00:00:02.761681 (CPU load 92%)</text>
<rect x="587" y="502" width="602" height="448" fill="#6A9ADA"/>
<rect x="587" y="502" width="602" height="21" fill="url(#tb)"/>
<rect x="587" y="502" width="602" height="1" fill="#4A5A8A"/>
<rect x="587" y="503" width="602" height="1" fill="#7AA0F0"/>
<rect x="587" y="523" width="4" height="427" fill="#8CBCEC"/>
<rect x="589.5" y="523" width="1.5" height="427" fill="#F0F4FA"/>
<text x="590" y="518" font-size="12.5" font-weight="bold" fill="#FFFFFF" textLength="107" lengthAdjust="spacingAndGlyphs">Digital Oscilloscope</text>
<rect x="591" y="523" width="405" height="1" fill="#F4F8FC"/>
<rect x="591" y="524" width="405" height="405" fill="#000"/>
<rect x="592" y="525" width="402" height="2" fill="#9A9A9A"/>
<path d="M613.5,527 V927 M633.5,527 V927 M653.5,527 V927 M673.5,527 V927 M693.5,527 V927 M713.5,527 V927 M733.5,527 V927 M753.5,527 V927 M773.5,527 V927 M813.5,527 V927 M833.5,527 V927 M853.5,527 V927 M873.5,527 V927 M893.5,527 V927 M913.5,527 V927 M933.5,527 V927 M953.5,527 V927 M973.5,527 V927 M993.5,527 V927 M592,546.5 H994 M592,566.5 H994 M592,586.5 H994 M592,606.5 H994 M592,626.5 H994 M592,646.5 H994 M592,666.5 H994 M592,686.5 H994 M592,706.5 H994 M592,726.5 H994 M592,746.5 H994 M592,766.5 H994 M592,786.5 H994 M592,806.5 H994 M592,826.5 H994 M592,846.5 H994 M592,866.5 H994 M592,886.5 H994 M592,906.5 H994 M592,926.5 H994" stroke="#1C421C" stroke-width="1" fill="none"/>
<path d="M592.5,527 V927" stroke="#8AA08A" stroke-width="1"/>
<path d="M592,926.5 H994" stroke="#B8C8B8" stroke-width="1"/>
<path d="M793.5,527 V927" stroke="#A8A8A8" stroke-width="1"/>
<text x="794" y="534" font-size="8.5" fill="#A0A0A0" textLength="28" lengthAdjust="spacingAndGlyphs">0.00 S</text>
<path d="M592,664.5 H598.5 V564.5 H608.5 V664.5 H618.5 V564.5 H628.5 V664.5 H638.5 V564.5 H648.5 V664.5 H658.5 V564.5 H668.5 V664.5 H678.5 V564.5 H688.5 V664.5 H698.5 V564.5 H708.5 V664.5 H718.5 V564.5 H728.5 V664.5 H738.5 V564.5 H748.5 V664.5 H758.5 V564.5 H768.5 V664.5 H778.5 V564.5 H788.5 V664.5 H798.5 V614.5 H800.0 V564.5 H808.5 V664.5 H818.5 V614.5 H820.0 V564.5 H828.5 V664.5 H838.5 V614.5 H840.0 V564.5 H848.5 V664.5 H858.5 V614.5 H860.0 V564.5 H868.5 V664.5 H878.5 V614.5 H880.0 V564.5 H888.5 V664.5 H898.5 V614.5 H900.0 V564.5 H908.5 V664.5 H918.5 V614.5 H920.0 V564.5 H928.5 V664.5 H938.5 V614.5 H940.0 V564.5 H948.5 V664.5 H958.5 V564.5 H968.5 V664.5 H978.5 V564.5 H988.5 V664.5 H994" stroke="#E6E672" stroke-width="1.3" fill="none"/>
<path d="M592.5,728.5 H612.5 V828.5 H793.5 V728.5 H812.5 V828.5 H992.5 V728.5" stroke="#3EC0D8" stroke-width="1.3" fill="none"/>
<rect x="591" y="928.5" width="405" height="1.5" fill="#1A1A1A"/>
<rect x="591" y="930" width="405" height="16" fill="#F2F2F4"/>
<rect x="591" y="945.5" width="405" height="1.5" fill="#1A1A1A"/>
<rect x="592" y="930" width="15" height="15" fill="#E4E4E4"/>
<rect x="606" y="930" width="1.5" height="15" fill="#A0A0A0"/>
<path d="M596,937.5 L601,933.5 V941.5 Z" fill="#000"/>
<rect x="967" y="930" width="7" height="15" fill="#D8D8D8"/>
<rect x="973.5" y="930" width="1.5" height="15" fill="#909090"/>
<rect x="979" y="930" width="15" height="15" fill="#E4E4E4"/>
<path d="M989,937.5 L985,933.5 V941.5 Z" fill="#000"/>
<rect x="994" y="524" width="1.5" height="405" fill="#E8F0E8"/>
<rect x="996" y="523" width="193" height="424" fill="#A9A9A9"/>
<rect x="995" y="523" width="194" height="1" fill="#F0F4F8"/>
<rect x="996" y="523" width="1.6" height="424" fill="#000"/>
<rect x="998" y="524" width="1" height="422" fill="#F2ECF2"/>
<rect x="1090" y="523" width="1.6" height="424" fill="#000"/>
<rect x="1092" y="524" width="1" height="422" fill="#F2ECF2"/>
<rect x="1184" y="523" width="1.6" height="424" fill="#000"/>
<rect x="1186" y="524" width="1" height="422" fill="#F2ECF2"/>
<rect x="996" y="549" width="193" height="1.6" fill="#000"/>
<rect x="998" y="551" width="191" height="1" fill="#EEEEEE"/>
<rect x="996" y="733" width="193" height="1.6" fill="#000"/>
<rect x="998" y="735" width="191" height="1" fill="#EEEEEE"/>
<rect x="996" y="761" width="193" height="1.6" fill="#000"/>
<rect x="998" y="763" width="191" height="1" fill="#EEEEEE"/>
<rect x="996" y="945" width="193" height="2" fill="#000"/>
<rect x="587" y="947" width="602" height="3" fill="#3C6AA8"/>
<text x="1040.5" y="541.5" font-size="12.5" fill="#D89C9C" text-anchor="middle" font-weight="bold" textLength="41" lengthAdjust="spacingAndGlyphs" opacity="0.8">Trigger</text>
<text x="1137.2" y="542" font-size="12.5" fill="#F4F41A" text-anchor="middle" font-weight="bold" textLength="56.5" lengthAdjust="spacingAndGlyphs" >Channel A</text>
<text x="1042" y="752.8" font-size="12.5" fill="#E8883A" text-anchor="middle" font-weight="bold" textLength="60.5" lengthAdjust="spacingAndGlyphs" >Horizontal</text>
<text x="1137" y="754" font-size="12.5" fill="#3A9ADA" text-anchor="middle" font-weight="bold" textLength="57" lengthAdjust="spacingAndGlyphs" >Channel B</text>
<text x="1028.4" y="559.8" font-size="9.2" fill="#2A2A2A" text-anchor="middle" font-weight="normal" textLength="21.5" lengthAdjust="spacingAndGlyphs" >Level</text>
<rect x="1007.5" y="562" width="41.5" height="81.5" fill="none" stroke="#E8E8E8" stroke-width="1"/>
<rect x="1008.5" y="563" width="39.5" height="79.5" fill="#A9A9A9" stroke="#000" stroke-width="1.3"/>
<rect x="1015" y="564.5" width="1.2" height="76.5" fill="#F0F0F0"/>
<rect x="1016" y="564.5" width="24.5" height="76.5" fill="url(#vs)"/>
<rect x="1040.3" y="564.5" width="1.4" height="76.5" fill="#000"/>
<path d="M1016,567.0 h3.2 M1037,567.0 h3.2 M1016,571.0 h3.2 M1037,571.0 h3.2 M1016,574.9 h3.2 M1037,574.9 h3.2 M1016,578.9 h3.2 M1037,578.9 h3.2 M1016,582.8 h3.2 M1037,582.8 h3.2 M1016,586.8 h3.2 M1037,586.8 h3.2 M1016,590.7 h3.2 M1037,590.7 h3.2 M1016,594.7 h3.2 M1037,594.7 h3.2 M1016,598.6 h3.2 M1037,598.6 h3.2 M1016,602.6 h3.2 M1037,602.6 h3.2 M1016,606.5 h3.2 M1037,606.5 h3.2 M1016,610.5 h3.2 M1037,610.5 h3.2 M1016,614.4 h3.2 M1037,614.4 h3.2 M1016,618.4 h3.2 M1037,618.4 h3.2 M1016,622.3 h3.2 M1037,622.3 h3.2 M1016,626.3 h3.2 M1037,626.3 h3.2 M1016,630.2 h3.2 M1037,630.2 h3.2 M1016,634.2 h3.2 M1037,634.2 h3.2 M1016,638.1 h3.2 M1037,638.1 h3.2" stroke="#2A2A2A" stroke-width="1" opacity="0.75"/>
<clipPath id="clip996549"><rect x="1016" y="564.5" width="24.5" height="76.5"/></clipPath><g clip-path="url(#clip996549)">
<text x="1028.3" y="584.3" font-size="9.3" fill="#000" text-anchor="middle" font-weight="bold" >40</text>
<text x="1028.3" y="604.3" font-size="9.3" fill="#000" text-anchor="middle" font-weight="bold" >50</text>
<text x="1028.3" y="623.8" font-size="9.3" fill="#000" text-anchor="middle" font-weight="bold" >60</text>
</g>
<path d="M1009.5,597.3 L1015,601.8 L1009.5,606.3 Z" fill="#E80000"/>
<path d="M1046.5,597.3 L1041,601.8 L1046.5,606.3 Z" fill="#E80000"/>
<g opacity="0.7"><path d="M1003,590.3 L1007,596.8 H999 Z M1003,613.3 L1007,606.8 H999 Z" fill="#F0A0A0"/><rect x="1002.2" y="595.8" width="1.6" height="12" fill="#F0A0A0"/></g>
<text x="1071.5" y="565.6" font-size="9.8" fill="#2A2A2A" text-anchor="end" font-weight="normal" >AC</text>
<text x="1071.5" y="579.4" font-size="9.8" fill="#2A2A2A" text-anchor="end" font-weight="normal" >DC</text>
<path d="M1074.0,585.0 V552.0 H1088.0" stroke="#F4F4F4" stroke-width="1" fill="none"/>
<path d="M1075.3,584.5 V553.3 H1087.5" stroke="#000" stroke-width="1.3" fill="none"/>
<path d="M1074.0,585.6 H1088.6 V552.0" stroke="#000" stroke-width="1.3" fill="none"/>
<path d="M1076.0,584.2 H1087.2 V554.0" stroke="#F0F0F0" stroke-width="1" fill="none"/>
<rect x="1080.55" y="557.5" width="2" height="11.5" fill="#000"/>
<rect x="1076.1" y="568.5" width="9.9" height="14.5" fill="#E0E0E0"/>
<rect x="1076.1" y="582.3" width="9.9" height="1" fill="#222"/>
<rect x="1085.6" y="568.5" width="0.8" height="14.5" fill="#666"/>
<path d="M1077.7,571.1 h6.5 M1077.7,574.1 h6.5 M1077.7,577.1 h6.5 M1077.7,580.1 h6.5" stroke="#3A3A3A" stroke-width="1"/>
<path d="M1074.0,630.2 V596.5 H1088.0" stroke="#F4F4F4" stroke-width="1" fill="none"/>
<path d="M1075.3,629.7 V597.8 H1087.5" stroke="#000" stroke-width="1.3" fill="none"/>
<path d="M1074.0,630.8000000000001 H1088.6 V596.5" stroke="#000" stroke-width="1.3" fill="none"/>
<path d="M1076.0,629.4000000000001 H1087.2 V598.5" stroke="#F0F0F0" stroke-width="1" fill="none"/>
<rect x="1080.55" y="612" width="2" height="13" fill="#000"/>
<rect x="1076.1" y="598.5" width="9.9" height="14.5" fill="#E0E0E0"/>
<rect x="1076.1" y="612.3" width="9.9" height="1" fill="#222"/>
<rect x="1085.6" y="598.5" width="0.8" height="14.5" fill="#666"/>
<path d="M1077.7,601.1 h6.5 M1077.7,604.1 h6.5 M1077.7,607.1 h6.5 M1077.7,610.1 h6.5" stroke="#3A3A3A" stroke-width="1"/>
<path d="M1070,601.5 h-3.5 v10 h-3.5 M1063,616.5 h3.5 v10 h3.5" stroke="#333" stroke-width="1.2" fill="none"/>
<text x="1071.5" y="654" font-size="9.8" fill="#2A2A2A" text-anchor="end" font-weight="normal" >Auto</text>
<rect x="1074.5" y="643.8" width="14.3" height="13.6" fill="#111"/>
<rect x="1074" y="643" width="14" height="13.5" fill="url(#pinkb)"/>
<text x="1071.5" y="669.3" font-size="9.8" fill="#2A2A2A" text-anchor="end" font-weight="normal" textLength="38.4" lengthAdjust="spacingAndGlyphs" >One-Shot</text>
<rect x="1074.5" y="660.3" width="14.3" height="13.6" fill="#111"/>
<rect x="1074" y="659.5" width="14" height="13.5" fill="url(#darkb)"/>
<text x="1071.5" y="685" font-size="9.8" fill="#2A2A2A" text-anchor="end" font-weight="normal" textLength="35.3" lengthAdjust="spacingAndGlyphs" >Cursors</text>
<rect x="1074.5" y="676.3" width="14.3" height="13.6" fill="#111"/>
<rect x="1074" y="675.5" width="14" height="13.5" fill="url(#pinkb)"/>
<text x="1043.5" y="705" font-size="9.8" fill="#2A2A2A" text-anchor="middle" font-weight="normal" textLength="29" lengthAdjust="spacingAndGlyphs" >Source</text>
<text x="1023.5" y="716" font-size="9" fill="#E8E840" text-anchor="middle" font-weight="bold" >A</text>
<text x="1038" y="716" font-size="9" fill="#40A0E0" text-anchor="middle" font-weight="bold" >B</text>
<text x="1053" y="716" font-size="9" fill="#E040A0" text-anchor="middle" font-weight="bold" >C</text>
<text x="1067" y="716" font-size="9" fill="#20A060" text-anchor="middle" font-weight="bold" >D</text>
<rect x="1012.5" y="718.5" width="63" height="14" fill="none" stroke="#000" stroke-width="1.2"/>
<rect x="1013.8" y="719.8" width="61" height="12" fill="none" stroke="#EEE" stroke-width="0.8"/>
<rect x="1018" y="724.5" width="51" height="2.2" fill="#000"/>
<rect x="1029" y="720.3" width="15" height="10.5" fill="#D4D4D4" stroke="#444" stroke-width="0.8"/>
<path d="M1033,722 v7 M1035.5,722 v7 M1038,722 v7 M1040.5,722 v7" stroke="#333" stroke-width="0.9"/>
<text x="1122.4" y="559.8" font-size="9.2" fill="#2A2A2A" text-anchor="middle" font-weight="normal" textLength="32.5" lengthAdjust="spacingAndGlyphs" >Position</text>
<rect x="1101.5" y="562" width="41.5" height="81.5" fill="none" stroke="#E8E8E8" stroke-width="1"/>
<rect x="1102.5" y="563" width="39.5" height="79.5" fill="#A9A9A9" stroke="#000" stroke-width="1.3"/>
<rect x="1109" y="564.5" width="1.2" height="76.5" fill="#F0F0F0"/>
<rect x="1110" y="564.5" width="24.5" height="76.5" fill="url(#vs)"/>
<rect x="1134.3" y="564.5" width="1.4" height="76.5" fill="#000"/>
<path d="M1110,567.0 h3.2 M1131,567.0 h3.2 M1110,571.0 h3.2 M1131,571.0 h3.2 M1110,574.9 h3.2 M1131,574.9 h3.2 M1110,578.9 h3.2 M1131,578.9 h3.2 M1110,582.8 h3.2 M1131,582.8 h3.2 M1110,586.8 h3.2 M1131,586.8 h3.2 M1110,590.7 h3.2 M1131,590.7 h3.2 M1110,594.7 h3.2 M1131,594.7 h3.2 M1110,598.6 h3.2 M1131,598.6 h3.2 M1110,602.6 h3.2 M1131,602.6 h3.2 M1110,606.5 h3.2 M1131,606.5 h3.2 M1110,610.5 h3.2 M1131,610.5 h3.2 M1110,614.4 h3.2 M1131,614.4 h3.2 M1110,618.4 h3.2 M1131,618.4 h3.2 M1110,622.3 h3.2 M1131,622.3 h3.2 M1110,626.3 h3.2 M1131,626.3 h3.2 M1110,630.2 h3.2 M1131,630.2 h3.2 M1110,634.2 h3.2 M1131,634.2 h3.2 M1110,638.1 h3.2 M1131,638.1 h3.2" stroke="#2A2A2A" stroke-width="1" opacity="0.75"/>
<clipPath id="clip1090549"><rect x="1110" y="564.5" width="24.5" height="76.5"/></clipPath><g clip-path="url(#clip1090549)">
<text x="1122.3" y="579.9" font-size="9.3" fill="#000" text-anchor="middle" font-weight="bold" >50</text>
<text x="1122.3" y="600.3" font-size="9.3" fill="#000" text-anchor="middle" font-weight="bold" >60</text>
<text x="1122.3" y="620" font-size="9.3" fill="#000" text-anchor="middle" font-weight="bold" >70</text>
<text x="1122.3" y="640.5" font-size="9.3" fill="#000" text-anchor="middle" font-weight="bold" >80</text>
</g>
<path d="M1103.5,596.8 L1109,601.3 L1103.5,605.8 Z" fill="#E80000"/>
<path d="M1140.5,596.8 L1135,601.3 L1140.5,605.8 Z" fill="#E80000"/>
<g opacity="1.0"><path d="M1097,589.8 L1101,596.3 H1093 Z M1097,612.8 L1101,606.3 H1093 Z" fill="#F0F000"/><rect x="1096.2" y="595.3" width="1.6" height="12" fill="#F0F000"/></g>
<text x="1165.8" y="565.6" font-size="9.8" fill="#2A2A2A" text-anchor="end" font-weight="normal" >AC</text>
<text x="1165.8" y="579.6" font-size="9.8" fill="#2A2A2A" text-anchor="end" font-weight="normal" >DC</text>
<text x="1165.8" y="593.4" font-size="9.8" fill="#2A2A2A" text-anchor="end" font-weight="normal" >GND</text>
<text x="1165.8" y="607.6" font-size="9.8" fill="#2A2A2A" text-anchor="end" font-weight="normal" >OFF</text>
<path d="M1168.0,615.0 V552.0 H1182.5" stroke="#F4F4F4" stroke-width="1" fill="none"/>
<path d="M1169.3,614.5 V553.3 H1182.0" stroke="#000" stroke-width="1.3" fill="none"/>
<path d="M1168.0,615.6 H1183.1 V552.0" stroke="#000" stroke-width="1.3" fill="none"/>
<path d="M1170.0,614.2 H1181.7 V554.0" stroke="#F0F0F0" stroke-width="1" fill="none"/>
<rect x="1174.8" y="557.5" width="2" height="51.5" fill="#000"/>
<rect x="1170.1" y="568.5" width="10.4" height="14.5" fill="#E0E0E0"/>
<rect x="1170.1" y="582.3" width="10.4" height="1" fill="#222"/>
<rect x="1180.1" y="568.5" width="0.8" height="14.5" fill="#666"/>
<path d="M1171.7,571.1 h7 M1171.7,574.1 h7 M1171.7,577.1 h7 M1171.7,580.1 h7" stroke="#3A3A3A" stroke-width="1"/>
<text x="1165.8" y="627.2" font-size="9.8" fill="#2A2A2A" text-anchor="end" font-weight="normal" textLength="22" lengthAdjust="spacingAndGlyphs" >Invert</text>
<rect x="1169.0" y="617.8" width="14.3" height="13.6" fill="#111"/>
<rect x="1168.5" y="617" width="14" height="13.5" fill="url(#darkb)"/>
<text x="1165.8" y="643.6" font-size="9.8" fill="#2A2A2A" text-anchor="end" font-weight="normal" >A+B</text>
<rect x="1169.0" y="634.3" width="14.3" height="13.6" fill="#111"/>
<rect x="1168.5" y="633.5" width="14" height="13.5" fill="url(#darkb)"/>
<path d="M1094.2,732.5 V688.3 A44.2,44.2 0 0 1 1182.6000000000001,688.3 V732.5 H1157.4 V708.3 H1119.5 V732.5 Z" fill="#FFFFFF" stroke="#5A5A5A" stroke-width="1.2"/>
<path d="M1153.9,665.0 L1163.3,650.6" stroke="#A9A9A9" stroke-width="3.6"/>
<path d="M1155.6,666.1 L1165.1,651.8" stroke="#4A4A4A" stroke-width="1"/>
<path d="M1152.1,663.8 L1161.6,649.4" stroke="#4A4A4A" stroke-width="1"/>
<text x="1111.2" y="718.5" font-size="8.6" fill="#303030" text-anchor="middle" font-weight="normal" >20</text>
<text x="1102.8" y="706.0" font-size="8.6" fill="#303030" text-anchor="middle" font-weight="normal" >10</text>
<text x="1099.9" y="691.3" font-size="8.6" fill="#303030" text-anchor="middle" font-weight="normal" >5</text>
<text x="1102.8" y="676.6" font-size="8.6" fill="#303030" text-anchor="middle" font-weight="normal" >2</text>
<text x="1111.2" y="664.1" font-size="8.6" fill="#303030" text-anchor="middle" font-weight="normal" >1</text>
<text x="1123.7" y="655.7" font-size="8.6" fill="#303030" text-anchor="middle" font-weight="normal" >0.5</text>
<text x="1138.4" y="652.8" font-size="8.6" fill="#303030" text-anchor="middle" font-weight="normal" >0.2</text>
<text x="1153.1" y="655.7" font-size="8.6" fill="#303030" text-anchor="middle" font-weight="normal" >0.1</text>
<text x="1165.6" y="664.1" font-size="8.6" fill="#303030" text-anchor="middle" font-weight="normal" >50</text>
<text x="1174.0" y="676.6" font-size="8.6" fill="#303030" text-anchor="middle" font-weight="normal" >20</text>
<text x="1176.9" y="691.3" font-size="8.6" fill="#303030" text-anchor="middle" font-weight="normal" >10</text>
<text x="1174.0" y="706.0" font-size="8.6" fill="#303030" text-anchor="middle" font-weight="normal" >5</text>
<text x="1165.6" y="718.5" font-size="8.6" fill="#303030" text-anchor="middle" font-weight="normal" >2</text>
<path d="M1117.2,709.5 L1114.0,712.7 M1110.7,699.8 L1106.5,701.5 M1108.4,688.3 L1103.9,688.3 M1110.7,676.8 L1106.5,675.1 M1117.2,667.1 L1114.0,663.9 M1126.9,660.6 L1125.2,656.4 M1138.4,658.3 L1138.4,653.8 M1149.9,660.6 L1151.6,656.4 M1159.6,667.1 L1162.8,663.9 M1166.1,676.8 L1170.3,675.1 M1168.4,688.3 L1172.9,688.3 M1166.1,699.8 L1170.3,701.5 M1159.6,709.5 L1162.8,712.7" stroke="#303030" stroke-width="1"/>
<text x="1106" y="728.5" font-size="11" fill="#303030" text-anchor="middle" font-weight="normal" >V</text>
<text x="1170" y="728.5" font-size="11" fill="#303030" text-anchor="middle" font-weight="normal" >mV</text>
<circle cx="1138.4" cy="688.3" r="30" fill="url(#knob)"/>
<circle cx="1138.4" cy="688.3" r="29.6" fill="none" stroke="url(#rim)" stroke-width="1.4"/>
<circle cx="1139.4" cy="689.8" r="16" fill="#555" opacity="0.6"/>
<circle cx="1138.4" cy="688.3" r="15" fill="url(#cap)"/>
<text x="1122.4" y="771.8" font-size="9.2" fill="#2A2A2A" text-anchor="middle" font-weight="normal" textLength="32.5" lengthAdjust="spacingAndGlyphs" >Position</text>
<rect x="1101.5" y="774" width="41.5" height="81.5" fill="none" stroke="#E8E8E8" stroke-width="1"/>
<rect x="1102.5" y="775" width="39.5" height="79.5" fill="#A9A9A9" stroke="#000" stroke-width="1.3"/>
<rect x="1109" y="776.5" width="1.2" height="76.5" fill="#F0F0F0"/>
<rect x="1110" y="776.5" width="24.5" height="76.5" fill="url(#vs)"/>
<rect x="1134.3" y="776.5" width="1.4" height="76.5" fill="#000"/>
<path d="M1110,779.0 h3.2 M1131,779.0 h3.2 M1110,783.0 h3.2 M1131,783.0 h3.2 M1110,786.9 h3.2 M1131,786.9 h3.2 M1110,790.9 h3.2 M1131,790.9 h3.2 M1110,794.8 h3.2 M1131,794.8 h3.2 M1110,798.8 h3.2 M1131,798.8 h3.2 M1110,802.7 h3.2 M1131,802.7 h3.2 M1110,806.7 h3.2 M1131,806.7 h3.2 M1110,810.6 h3.2 M1131,810.6 h3.2 M1110,814.6 h3.2 M1131,814.6 h3.2 M1110,818.5 h3.2 M1131,818.5 h3.2 M1110,822.5 h3.2 M1131,822.5 h3.2 M1110,826.4 h3.2 M1131,826.4 h3.2 M1110,830.4 h3.2 M1131,830.4 h3.2 M1110,834.3 h3.2 M1131,834.3 h3.2 M1110,838.3 h3.2 M1131,838.3 h3.2 M1110,842.2 h3.2 M1131,842.2 h3.2 M1110,846.2 h3.2 M1131,846.2 h3.2 M1110,850.1 h3.2 M1131,850.1 h3.2" stroke="#2A2A2A" stroke-width="1" opacity="0.75"/>
<clipPath id="clip1090761"><rect x="1110" y="776.5" width="24.5" height="76.5"/></clipPath><g clip-path="url(#clip1090761)">
<text x="1122.3" y="779.5" font-size="9.3" fill="#000" text-anchor="middle" font-weight="bold" >-120</text>
<text x="1122.3" y="799.8" font-size="9.3" fill="#000" text-anchor="middle" font-weight="bold" >-110</text>
<text x="1122.3" y="819.7" font-size="9.3" fill="#000" text-anchor="middle" font-weight="bold" >-100</text>
<text x="1122.3" y="840" font-size="9.3" fill="#000" text-anchor="middle" font-weight="bold" >-90</text>
</g>
<path d="M1103.5,809.0 L1109,813.5 L1103.5,818.0 Z" fill="#E80000"/>
<path d="M1140.5,809.0 L1135,813.5 L1140.5,818.0 Z" fill="#E80000"/>
<g opacity="1.0"><path d="M1097,802.0 L1101,808.5 H1093 Z M1097,825.0 L1101,818.5 H1093 Z" fill="#2A9AE0"/><rect x="1096.2" y="807.5" width="1.6" height="12" fill="#2A9AE0"/></g>
<text x="1166" y="778" font-size="9.8" fill="#2A2A2A" text-anchor="end" font-weight="normal" >AC</text>
<text x="1166" y="791.6" font-size="9.8" fill="#2A2A2A" text-anchor="end" font-weight="normal" >DC</text>
<text x="1166" y="806" font-size="9.8" fill="#2A2A2A" text-anchor="end" font-weight="normal" >GND</text>
<text x="1166" y="819.7" font-size="9.8" fill="#2A2A2A" text-anchor="end" font-weight="normal" >OFF</text>
<path d="M1168.0,827.0 V764.0 H1182.5" stroke="#F4F4F4" stroke-width="1" fill="none"/>
<path d="M1169.3,826.5 V765.3 H1182.0" stroke="#000" stroke-width="1.3" fill="none"/>
<path d="M1168.0,827.6 H1183.1 V764.0" stroke="#000" stroke-width="1.3" fill="none"/>
<path d="M1170.0,826.2 H1181.7 V766.0" stroke="#F0F0F0" stroke-width="1" fill="none"/>
<rect x="1174.8" y="770" width="2" height="51" fill="#000"/>
<rect x="1170.1" y="780.5" width="10.4" height="14.5" fill="#E0E0E0"/>
<rect x="1170.1" y="794.3" width="10.4" height="1" fill="#222"/>
<rect x="1180.1" y="780.5" width="0.8" height="14.5" fill="#666"/>
<path d="M1171.7,783.1 h7 M1171.7,786.1 h7 M1171.7,789.1 h7 M1171.7,792.1 h7" stroke="#3A3A3A" stroke-width="1"/>
<text x="1166" y="839" font-size="9.8" fill="#2A2A2A" text-anchor="end" font-weight="normal" textLength="22" lengthAdjust="spacingAndGlyphs" >Invert</text>
<rect x="1169.0" y="830.3" width="14.3" height="13.6" fill="#111"/>
<rect x="1168.5" y="829.5" width="14" height="13.5" fill="url(#darkb)"/>
<path d="M1094.2,944.5 V900.3 A44.2,44.2 0 0 1 1182.6000000000001,900.3 V944.5 H1157.4 V920.3 H1119.5 V944.5 Z" fill="#FFFFFF" stroke="#5A5A5A" stroke-width="1.2"/>
<path d="M1153.9,877.0 L1163.3,862.6" stroke="#A9A9A9" stroke-width="3.6"/>
<path d="M1155.6,878.1 L1165.1,863.8" stroke="#4A4A4A" stroke-width="1"/>
<path d="M1152.1,875.8 L1161.6,861.4" stroke="#4A4A4A" stroke-width="1"/>
<text x="1111.2" y="930.5" font-size="8.6" fill="#303030" text-anchor="middle" font-weight="normal" >20</text>
<text x="1102.8" y="918.0" font-size="8.6" fill="#303030" text-anchor="middle" font-weight="normal" >10</text>
<text x="1099.9" y="903.3" font-size="8.6" fill="#303030" text-anchor="middle" font-weight="normal" >5</text>
<text x="1102.8" y="888.6" font-size="8.6" fill="#303030" text-anchor="middle" font-weight="normal" >2</text>
<text x="1111.2" y="876.1" font-size="8.6" fill="#303030" text-anchor="middle" font-weight="normal" >1</text>
<text x="1123.7" y="867.7" font-size="8.6" fill="#303030" text-anchor="middle" font-weight="normal" >0.5</text>
<text x="1138.4" y="864.8" font-size="8.6" fill="#303030" text-anchor="middle" font-weight="normal" >0.2</text>
<text x="1153.1" y="867.7" font-size="8.6" fill="#303030" text-anchor="middle" font-weight="normal" >0.1</text>
<text x="1165.6" y="876.1" font-size="8.6" fill="#303030" text-anchor="middle" font-weight="normal" >50</text>
<text x="1174.0" y="888.6" font-size="8.6" fill="#303030" text-anchor="middle" font-weight="normal" >20</text>
<text x="1176.9" y="903.3" font-size="8.6" fill="#303030" text-anchor="middle" font-weight="normal" >10</text>
<text x="1174.0" y="918.0" font-size="8.6" fill="#303030" text-anchor="middle" font-weight="normal" >5</text>
<text x="1165.6" y="930.5" font-size="8.6" fill="#303030" text-anchor="middle" font-weight="normal" >2</text>
<path d="M1117.2,921.5 L1114.0,924.7 M1110.7,911.8 L1106.5,913.5 M1108.4,900.3 L1103.9,900.3 M1110.7,888.8 L1106.5,887.1 M1117.2,879.1 L1114.0,875.9 M1126.9,872.6 L1125.2,868.4 M1138.4,870.3 L1138.4,865.8 M1149.9,872.6 L1151.6,868.4 M1159.6,879.1 L1162.8,875.9 M1166.1,888.8 L1170.3,887.1 M1168.4,900.3 L1172.9,900.3 M1166.1,911.8 L1170.3,913.5 M1159.6,921.5 L1162.8,924.7" stroke="#303030" stroke-width="1"/>
<text x="1106" y="940.5" font-size="11" fill="#303030" text-anchor="middle" font-weight="normal" >V</text>
<text x="1170" y="940.5" font-size="11" fill="#303030" text-anchor="middle" font-weight="normal" >mV</text>
<circle cx="1138.4" cy="900.3" r="30" fill="url(#knob)"/>
<circle cx="1138.4" cy="900.3" r="29.6" fill="none" stroke="url(#rim)" stroke-width="1.4"/>
<circle cx="1139.4" cy="901.8" r="16" fill="#555" opacity="0.6"/>
<circle cx="1138.4" cy="900.3" r="15" fill="url(#cap)"/>
<text x="1043" y="775.2" font-size="9.8" fill="#2A2A2A" text-anchor="middle" font-weight="normal" textLength="28.5" lengthAdjust="spacingAndGlyphs" >Source</text>
<path d="M1009.5,783.5 L1020.5,776.5 V783.5 Z" fill="#C8A080" opacity="0.8"/>
<text x="1030" y="784" font-size="9" fill="#E8E840" text-anchor="middle" font-weight="bold" >A</text>
<text x="1044.2" y="784" font-size="9" fill="#40A0E0" text-anchor="middle" font-weight="bold" >B</text>
<text x="1058.6" y="784" font-size="9" fill="#E040A0" text-anchor="middle" font-weight="bold" >C</text>
<text x="1073.4" y="784" font-size="9" fill="#20A060" text-anchor="middle" font-weight="bold" >D</text>
<rect x="1005.5" y="787.5" width="78" height="13.5" fill="none" stroke="#000" stroke-width="1.2"/>
<rect x="1006.8" y="788.8" width="76" height="11" fill="none" stroke="#EEE" stroke-width="0.8"/>
<rect x="1022" y="792.6" width="55.4" height="2.4" fill="#000"/>
<rect x="1007" y="789" width="15" height="11" fill="#D4D4D4" stroke="#444" stroke-width="0.8"/>
<path d="M1010.5,791 v7 M1013,791 v7 M1015.5,791 v7 M1018,791 v7" stroke="#333" stroke-width="0.9"/>
<text x="1043" y="813.5" font-size="9.8" fill="#2A2A2A" text-anchor="middle" font-weight="normal" textLength="32.8" lengthAdjust="spacingAndGlyphs" >Position</text>
<rect x="1005" y="816.2" width="80" height="37.5" fill="none" stroke="#000" stroke-width="1.3"/>
<rect x="1006.5" y="817.5" width="77" height="35" fill="none" stroke="#E8E8E8" stroke-width="0.8"/>
<rect x="1007" y="823" width="75" height="24.5" fill="url(#hs)"/>
<rect x="1007" y="846.5" width="75" height="1.5" fill="#000"/>
<path d="M1010.0,823 v3 M1010.0,843.5 v3 M1014.2,823 v3 M1014.2,843.5 v3 M1018.4,823 v3 M1018.4,843.5 v3 M1022.6,823 v3 M1022.6,843.5 v3 M1026.8,823 v3 M1026.8,843.5 v3 M1031.0,823 v3 M1031.0,843.5 v3 M1035.2,823 v3 M1035.2,843.5 v3 M1039.4,823 v3 M1039.4,843.5 v3 M1043.6,823 v3 M1043.6,843.5 v3 M1047.8,823 v3 M1047.8,843.5 v3 M1052.0,823 v3 M1052.0,843.5 v3 M1056.2,823 v3 M1056.2,843.5 v3 M1060.4,823 v3 M1060.4,843.5 v3 M1064.6,823 v3 M1064.6,843.5 v3 M1068.8,823 v3 M1068.8,843.5 v3 M1073.0,823 v3 M1073.0,843.5 v3 M1077.2,823 v3 M1077.2,843.5 v3" stroke="#2A2A2A" stroke-width="1" opacity="0.75"/>
<path d="M1043,823 v5 M1043,841.5 v5" stroke="#111" stroke-width="1.2"/>
<text x="1023" y="838.3" font-size="9.6" fill="#000" text-anchor="middle" font-weight="bold" textLength="14.5" lengthAdjust="spacingAndGlyphs" >210</text>
<text x="1043.2" y="838.3" font-size="9.6" fill="#000" text-anchor="middle" font-weight="bold" textLength="14.5" lengthAdjust="spacingAndGlyphs" >200</text>
<text x="1063.3" y="838.3" font-size="9.6" fill="#000" text-anchor="middle" font-weight="bold" textLength="14.5" lengthAdjust="spacingAndGlyphs" >190</text>
<path d="M1038.5,817 L1047.5,817 L1043,822 Z" fill="#E80000"/>
<path d="M1038.5,853 L1047.5,853 L1043,848 Z" fill="#E80000"/>
<path d="M1000.2,944.5 V900.3 A44.2,44.2 0 0 1 1088.6000000000001,900.3 V944.5 H1063.4 V920.3 H1025.5 V944.5 Z" fill="#FFFFFF" stroke="#5A5A5A" stroke-width="1.2"/>
<path d="M1059.9,877.0 L1069.3,862.6" stroke="#A9A9A9" stroke-width="3.6"/>
<path d="M1061.6,878.1 L1071.1,863.8" stroke="#4A4A4A" stroke-width="1"/>
<path d="M1058.1,875.8 L1067.6,861.4" stroke="#4A4A4A" stroke-width="1"/>
<text x="1018.1" y="931.5" font-size="8.6" fill="#303030" text-anchor="middle" font-weight="normal" >200</text>
<text x="1011.4" y="923.1" font-size="8.6" fill="#303030" text-anchor="middle" font-weight="normal" >100</text>
<text x="1007.2" y="913.1" font-size="8.6" fill="#303030" text-anchor="middle" font-weight="normal" >50</text>
<text x="1005.9" y="902.4" font-size="8.6" fill="#303030" text-anchor="middle" font-weight="normal" >20</text>
<text x="1007.7" y="891.8" font-size="8.6" fill="#303030" text-anchor="middle" font-weight="normal" >10</text>
<text x="1012.3" y="882.1" font-size="8.6" fill="#303030" text-anchor="middle" font-weight="normal" >5</text>
<text x="1019.4" y="874.0" font-size="8.6" fill="#303030" text-anchor="middle" font-weight="normal" >2</text>
<text x="1028.6" y="868.2" font-size="8.6" fill="#303030" text-anchor="middle" font-weight="normal" >1</text>
<text x="1038.9" y="865.2" font-size="8.6" fill="#303030" text-anchor="middle" font-weight="normal" >0.5</text>
<text x="1049.7" y="865.2" font-size="8.6" fill="#303030" text-anchor="middle" font-weight="normal" >0.2</text>
<text x="1060.1" y="868.1" font-size="8.6" fill="#303030" text-anchor="middle" font-weight="normal" >0.1</text>
<text x="1071.4" y="875.8" font-size="8.6" fill="#303030" text-anchor="middle" font-weight="normal" >50</text>
<text x="1077.7" y="884.0" font-size="8.6" fill="#303030" text-anchor="middle" font-weight="normal" >20</text>
<text x="1081.5" y="893.0" font-size="8.6" fill="#303030" text-anchor="middle" font-weight="normal" >10</text>
<text x="1082.9" y="903.3" font-size="8.6" fill="#303030" text-anchor="middle" font-weight="normal" >5</text>
<text x="1081.5" y="913.6" font-size="8.6" fill="#303030" text-anchor="middle" font-weight="normal" >2</text>
<text x="1077.4" y="923.1" font-size="8.6" fill="#303030" text-anchor="middle" font-weight="normal" >1</text>
<text x="1070.7" y="931.5" font-size="8.6" fill="#303030" text-anchor="middle" font-weight="normal" >0.5</text>
<path d="M1023.9,922.2 L1020.9,925.5 M1018.7,915.7 L1014.8,918.0 M1015.4,908.0 L1011.0,909.1 M1014.4,899.6 L1009.9,899.5 M1015.8,891.3 L1011.5,890.0 M1019.4,883.7 L1015.6,881.3 M1025.0,877.5 L1022.0,874.0 M1032.1,873.0 L1030.2,868.9 M1040.1,870.6 L1039.5,866.2 M1048.5,870.6 L1049.1,866.1 M1056.6,872.9 L1058.4,868.8 M1065.4,878.9 L1068.6,875.7 M1070.4,885.3 L1074.3,883.0 M1073.3,892.3 L1077.6,891.1 M1074.4,900.3 L1078.9,900.3 M1073.3,908.3 L1077.6,909.5 M1070.1,915.8 L1074.0,918.1 M1064.9,922.2 L1067.9,925.5" stroke="#303030" stroke-width="1"/>
<text x="1012" y="940.5" font-size="11" fill="#303030" text-anchor="middle" font-weight="normal" >ms</text>
<text x="1076" y="940.5" font-size="11" fill="#303030" text-anchor="middle" font-weight="normal" >μs</text>
<circle cx="1044.4" cy="900.3" r="30" fill="url(#knob)"/>
<circle cx="1044.4" cy="900.3" r="29.6" fill="none" stroke="url(#rim)" stroke-width="1.4"/>
<circle cx="1045.4" cy="901.8" r="16" fill="#555" opacity="0.6"/>
<circle cx="1044.4" cy="900.3" r="15" fill="url(#cap)"/>
<path d="M1118.5,669.5 L1129.5,673 L1121,680 Z" fill="#F0E000"/>
<circle cx="1145.8" cy="695.8" r="2.3" fill="#F0E000"/>
<path d="M1118.5,881.5 L1129.5,885 L1121,892 Z" fill="#1A8AD8"/>
<circle cx="1145.5" cy="906.5" r="2.3" fill="#1A8AD8"/>
<path d="M1062,879.5 L1058.5,889 L1052,883 Z" fill="#E8801A"/>
<circle cx="1052" cy="907" r="2.3" fill="#E8801A"/>
<rect x="1121" y="719" width="35" height="13" fill="#FFFFFF" stroke="#000" stroke-width="1"/>
<text x="1123" y="729.8" font-size="10.8" fill="#000" text-anchor="start" font-weight="normal" >1</text>
<rect x="1121" y="931" width="35" height="13" fill="#FFFFFF" stroke="#000" stroke-width="1"/>
<text x="1123" y="941.8" font-size="10.8" fill="#000" text-anchor="start" font-weight="normal" >1</text>
<rect x="1027" y="930.6" width="35" height="13" fill="#FFFFFF" stroke="#000" stroke-width="1"/>
<text x="1029" y="941.4" font-size="10.8" fill="#101060" text-anchor="start" font-weight="normal" >50u</text>
</svg>
</body></html>
